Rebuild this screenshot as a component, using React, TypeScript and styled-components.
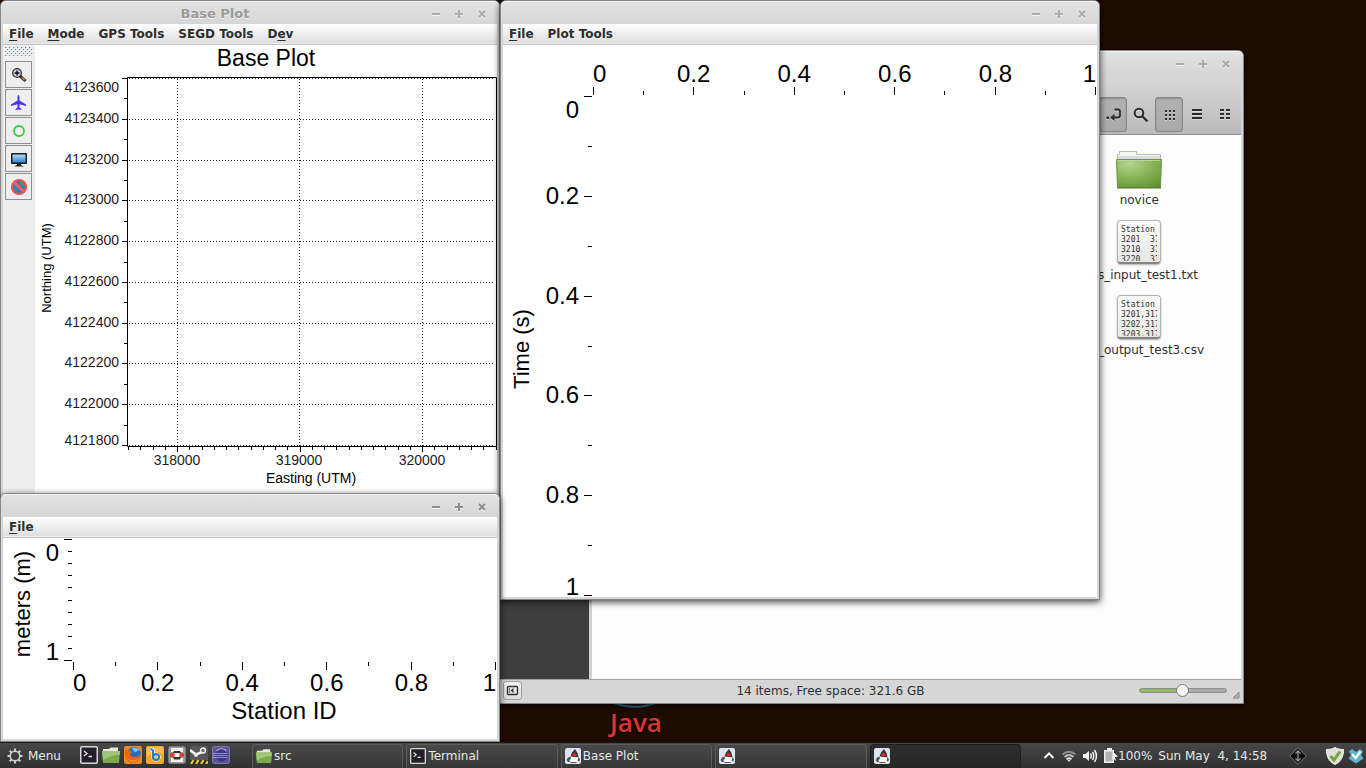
import React from "react";
import styled, { createGlobalStyle, css } from "styled-components";

const GlobalStyle = createGlobalStyle`
  * { box-sizing: border-box; }
  body { margin: 0; background: #1f0c01; }
  body, button, input { font-family: "DejaVu Sans", sans-serif; font-size: 12px; }
  button { border: 0; padding: 0; background: none; color: inherit; }
  svg { display: block; flex: none; }
`;

/* ---------- desktop ---------- */

const Desktop = styled.div`
  display: flex;
  flex-direction: column;
  width: 100%;
  height: 100vh;
  overflow: hidden;
`;

const Workspace = styled.main`
  position: relative;
  flex: 1;
  min-height: 0;
  background: #1f0c01;
`;

const Wallpaper = styled.div`
  position: absolute;
  left: 604px;
  top: 688px;
  width: 64px;
  display: flex;
  flex-direction: column;
  align-items: center;
`;

const JavaName = styled.span`
  font: 600 26px/28px "Open Sans", sans-serif;
  color: #dc3535;
  text-shadow: 0 1px 3px #000;
`;

/* ---------- window frame ---------- */

const Frame = styled.section<{ $x: number; $y: number; $w: number; $h: number }>`
  position: absolute;
  left: ${(p) => p.$x}px;
  top: ${(p) => p.$y}px;
  width: ${(p) => p.$w}px;
  height: ${(p) => p.$h}px;
  display: flex;
  flex-direction: column;
  padding: 0 2px 2px;
  border: 1px solid #868686;
  border-radius: 6px 6px 0 0;
  background: #d6d6d6;
  box-shadow: 0 2px 7px rgba(0, 0, 0, 0.75);
`;

const TitleBar = styled.header`
  display: flex;
  align-items: center;
  flex: none;
  height: 23px;
  margin: 0 -2px;
  padding: 1px 6px 0 5px;
  border-top: 1px solid #f6f6f6;
  border-radius: 5px 5px 0 0;
  background: linear-gradient(#e2e2e2, #d6d6d6);
`;

const Title = styled.h1`
  flex: 1;
  margin: 0;
  text-align: center;
  font-size: 13px;
  line-height: 16px;
  color: #9b9b9b;
  text-shadow: 0 1px 0 #f4f4f4;
`;

const WindowButton = styled.button<{ $active?: boolean }>`
  display: grid;
  place-items: center;
  width: 23px;
  height: 20px;
  color: ${(p) => (p.$active ? "#8d8d8d" : "#ababab")};
  svg { filter: drop-shadow(0 1px 0 #f2f2f2); }
`;

const MenuBar = styled.nav`
  display: flex;
  flex: none;
  gap: 2px;
  height: 21px;
  border-bottom: 1px solid #c2c2c2;
  background: linear-gradient(#ffffff, #dedede 19px, #ebebeb 19px);
`;

const MenuItem = styled.button`
  padding: 0 6px 1px;
  font-weight: bold;
  color: #2d2d2d;
  u { text-underline-offset: 2px; }
`;

const Body = styled.div<{ $bg?: string }>`
  display: flex;
  flex: 1;
  min-height: 0;
  background: ${(p) => p.$bg ?? "#fff"};
`;

function WindowControls({ active }: { active?: boolean }) {
  return (
    <>
      <WindowButton $active={active} aria-label="Minimize">
        <svg width="10" height="10"><path d="M1 5H9" stroke="currentColor" strokeWidth="2" /></svg>
      </WindowButton>
      <WindowButton $active={active} aria-label="Maximize">
        <svg width="10" height="10"><path d="M1 5H9M5 1V9" stroke="currentColor" strokeWidth="2" /></svg>
      </WindowButton>
      <WindowButton $active={active} aria-label="Close">
        <svg width="10" height="10"><path d="M2 2L8 8M8 2L2 8" stroke="currentColor" strokeWidth="2" /></svg>
      </WindowButton>
    </>
  );
}

/* ---------- chart pieces ---------- */

const Chart = styled.svg`
  overflow: visible;
  font-family: "Liberation Sans", Arial, sans-serif;
  fill: #000;
`;

const range = (n: number) => Array.from({ length: n }, (_, i) => i);

type AxisProps = { start: number; step: number; count: number; at: number; every: number; vertical?: boolean; hang?: boolean };

/* A row (or column) of ticks; every n-th one is long. They end at `at`, or begin there when hanging. */
function Ticks({ start, step, count, at, every, vertical, hang }: AxisProps) {
  return (
    <g>
      {range(count).map((i) => {
        const p = Math.round(start + i * step);
        const len = i % every === 0 ? 8 : 4;
        const from = hang ? at : at - len;
        return vertical ? (
          <rect key={i} x={from} y={p} width={len} height={1} />
        ) : (
          <rect key={i} x={p} y={from} width={1} height={len} />
        );
      })}
    </g>
  );
}

function BasePlotChart() {
  const left = 92, right = 461, top = 32, bottom = 401;
  const rowY = (i: number) => Math.round(33 + i * 40.78);
  const labels = range(10).map((i) => 4123600 - i * 200);
  return (
    <Chart width="462" height="449" fontSize="14">
      <text x="231" y="21" fontSize="23" textAnchor="middle">Base Plot</text>
      <path d={`M${left + 0.5} ${top + 0.5}H${right + 0.5}V${bottom + 0.5}H${left + 0.5}Z`} fill="none" stroke="#000" />
      <g stroke="#222" strokeDasharray="1 2" fill="none">
        {labels.map((_, i) => <path key={i} d={`M${left + 2} ${rowY(i) + 0.5}H${right - 2}`} />)}
        {[142, 264, 387].map((x) => <path key={x} d={`M${x + 0.5} ${top + 2}V${bottom}`} />)}
      </g>
      {range(19).map((i) => (
        <rect key={i} x={i % 2 ? 89 : 87} y={Math.round(33 + i * 20.39)} width={i % 2 ? 3 : 5} height={1} />
      ))}
      <g fill="#1c1c1c">
        {labels.map((n, i) => (
          <text key={n} x="84" y={i === 0 ? 47 : i === 9 ? 400 : rowY(i) + 4} textAnchor="end">{n}</text>
        ))}
        {[318000, 319000, 320000].map((n, i) => (
          <text key={n} x={[142, 264, 387][i]} y="420" textAnchor="middle">{n}</text>
        ))}
      </g>
      {range(31).map((i) => (
        <rect key={i} x={Math.round(93 + i * 12.25)} y={402} width={1} height={i % 10 === 4 ? 5 : 3} />
      ))}
      <text x="276" y="438" textAnchor="middle">Easting (UTM)</text>
      <text transform="translate(16 223) rotate(-90)" fontSize="13" textAnchor="middle">Northing (UTM)</text>
    </Chart>
  );
}

const unit = ["0", "0.2", "0.4", "0.6", "0.8", "1"];
const anchorOf = (i: number) => (i === 0 ? "start" : i === 5 ? "end" : "middle");

function ShotChart() {
  return (
    <Chart width="594" height="552" fontSize="24">
      <Ticks start={90} step={50.2} count={11} at={50} every={2} />
      {unit.map((t, i) => (
        <text key={t} x={90 + i * 100.6} y="37" textAnchor={anchorOf(i)}>{t}</text>
      ))}
      <Ticks start={51} step={49.9} count={11} at={89} every={2} vertical />
      {unit.map((t, i) => (
        <text key={t} x="76" y={[73, 159, 259, 358, 458, 550][i]} textAnchor="end">{t}</text>
      ))}
      <text transform="translate(26 304) rotate(-90)" fontSize="22" textAnchor="middle">Time (s)</text>
    </Chart>
  );
}

function StationChart() {
  return (
    <Chart width="494" height="201" fontSize="24">
      <Ticks start={1} step={12.1} count={11} at={69} every={10} vertical />
      <text x="56" y="23" textAnchor="end">0</text>
      <text x="56" y="122" textAnchor="end">1</text>
      <Ticks start={70} step={42.2} count={11} at={124} every={2} hang />
      {unit.map((t, i) => (
        <text key={t} x={70 + i * 84.6} y="153" textAnchor={anchorOf(i)}>{t}</text>
      ))}
      <text x="281" y="181" textAnchor="middle">Station ID</text>
      <text transform="translate(27 66) rotate(-90)" fontSize="22" textAnchor="middle">meters (m)</text>
    </Chart>
  );
}

/* ---------- base plot tool column ---------- */

const ToolColumn = styled.aside`
  display: flex;
  flex-direction: column;
  align-items: flex-start;
  gap: 1px;
  flex: none;
  width: 32px;
  padding: 2px;
  background: #eeeeee;
`;

const Grip = styled.svg`
  width: 28px;
  height: 10px;
  margin-bottom: 3px;
`;

const ToolButton = styled.button`
  display: grid;
  place-items: center;
  width: 27px;
  height: 27px;
  border: 1px solid #8f8f8f;
  background: #eeeeee;
`;

function BasePlotTools() {
  return (
    <ToolColumn>
      <Grip>
        <defs>
          <pattern id="dots" width="4" height="4" patternUnits="userSpaceOnUse">
            <path d="M0 0H1V1H0ZM2 2H3V3H2Z" fill="#6482a0" />
            <path d="M1 1H2V2H1ZM3 3H4V4H3Z" fill="#ffffff" />
            <path d="M1 0H2V1H1ZM3 2H4V3H3Z" fill="#c6d4e2" />
          </pattern>
        </defs>
        <rect width="28" height="10" fill="url(#dots)" />
      </Grip>
      <ToolButton aria-label="Zoom">
        <svg width="16" height="16">
          <path d="M8.500 8.500L14.500 14" stroke="#1a1a1a" strokeWidth="3" />
          <path d="M10.500 10.300L13.800 13.300" stroke="#d78a3a" strokeWidth="1.500" />
          <circle cx="6" cy="6" r="4.300" fill="#c9cbe4" stroke="#26262e" strokeWidth="1.200" />
          <path d="M3.500 6H8.500M6 3.500V8.500" stroke="#111" strokeWidth="1.400" />
        </svg>
      </ToolButton>
      <ToolButton aria-label="Flight">
        <svg width="17" height="17">
          <path d="M8.500 1C9.300 1 9.500 2.500 9.500 3.500V6.500L16 10.500V12L9.500 10.200V13.500L11.500 15V16L8.500 15.400L5.500 16V15L7.500 13.500V10.200L1 12V10.500L7.500 6.500V3.500C7.500 2.500 7.700 1 8.500 1Z" fill="#4a35ee" />
        </svg>
      </ToolButton>
      <ToolButton aria-label="Circle">
        <svg width="16" height="16"><circle cx="8" cy="8" r="5" fill="none" stroke="#41c93f" strokeWidth="1.800" /></svg>
      </ToolButton>
      <ToolButton aria-label="Display">
        <svg width="18" height="16">
          <defs><linearGradient id="screen" x2="0" y2="1"><stop stopColor="#b5dcf7" /><stop offset="1" stopColor="#2a84dc" /></linearGradient></defs>
          <rect x="1" y="2" width="16" height="11" rx="1" fill="#1c1c1c" />
          <rect x="2.500" y="3.500" width="13" height="8" fill="url(#screen)" />
          <path d="M7 13H11V14L14 15.500H4L7 14Z" fill="#2a2a2a" />
        </svg>
      </ToolButton>
      <ToolButton aria-label="Offline">
        <svg width="18" height="18">
          <circle cx="9" cy="9" r="6.500" fill="#2f7cc4" />
          <path d="M10 4L13 5L14 8L12 8L10 6ZM5 10L7 12L7 14L5 12Z" fill="#5d9a3a" />
          <circle cx="9" cy="9" r="7" fill="none" stroke="#f0504a" strokeWidth="2.200" />
          <path d="M4 4L14 14" stroke="#f4635c" strokeWidth="3" />
        </svg>
      </ToolButton>
    </ToolColumn>
  );
}

/* ---------- file manager ---------- */

const FileToolbar = styled.div`
  display: flex;
  flex: none;
  justify-content: flex-end;
  align-items: flex-end;
  height: 61px;
  padding: 0 2px 2px;
  border-bottom: 1px solid #8e8e8e;
  background: linear-gradient(#d6d6d6 10%, #bababa);
`;

const ViewButton = styled.button<{ $on?: boolean }>`
  display: grid;
  place-items: center;
  width: 28px;
  height: 35px;
  border-radius: 3px;
  color: #2c2c2c;
  ${(p) => p.$on && css`
    border: 1px solid #868686;
    background: linear-gradient(#b2b2b2, #aaaaaa);
    box-shadow: inset 0 1px 2px rgba(0, 0, 0, 0.2);
  `}
  svg { filter: drop-shadow(0 1px 0 rgba(255, 255, 255, 0.4)); }
`;

const Sidebar = styled.aside`
  flex: none;
  width: 92px;
  border-right: 3px solid #d3d0cf;
  background: #3e3e3e;
`;

const FileGrid = styled.div`
  display: flex;
  flex: 1;
  flex-direction: column;
  align-items: flex-end;
  padding: 10px 36px 0 0;
`;

const FileItem = styled.figure`
  display: flex;
  flex-direction: column;
  align-items: center;
  width: 132px;
  height: 75px;
  margin: 0;
`;

const FileName = styled.figcaption<{ $span: number }>`
  width: ${(p) => p.$span}px;
  margin-top: 3px;
  line-height: 16px;
  text-align: right;
  white-space: nowrap;
  color: #2c3234;
`;

const PreviewCard = styled.div`
  width: 44px;
  height: 44px;
  padding: 4px 3px;
  border: 1px solid #b4b4b4;
  border-bottom: 2px solid #858585;
  border-radius: 4px;
  background: linear-gradient(#fafafa, #e6e6e6);
  box-shadow: 0 1px 2px rgba(0, 0, 0, 0.3);
`;

const PreviewText = styled.pre`
  height: 36px;
  width: 36px;
  margin: 0;
  overflow: hidden;
  font: 8px/10px "DejaVu Sans Mono", monospace;
  color: #333;
`;

const StatusBar = styled.footer`
  display: flex;
  flex: none;
  align-items: center;
  height: 22px;
  padding: 0 1px 0 3px;
  border-top: 1px solid #a3a3a3;
  color: #2c3234;
`;

const PanelToggle = styled.button`
  display: grid;
  place-items: center;
  width: 19px;
  height: 19px;
  border: 1px solid #a0a0a0;
  border-radius: 3px;
  background: linear-gradient(#f2f2f2, #dcdcdc);
`;

const StatusText = styled.p`
  flex: 1;
  margin: 0;
  text-align: center;
`;

const ZoomSlider = styled.input`
  appearance: none;
  width: 88px;
  height: 14px;
  margin: 0 5px 0 0;
  background: transparent;
  &::-webkit-slider-runnable-track {
    height: 5px;
    border: 1px solid #8c8c8c;
    border-radius: 3px;
    background: linear-gradient(90deg, #90ba63 50%, #a9a9a9 50%);
  }
  &::-webkit-slider-thumb {
    appearance: none;
    width: 13px;
    height: 13px;
    margin-top: -5px;
    border: 1px solid #7b7b7b;
    border-radius: 50%;
    background: linear-gradient(#ffffff, #eeeeee);
  }
`;

function GreenFolder() {
  return (
    <svg width="48" height="44">
      <defs>
        <radialGradient id="leaf" cx=".3" cy=".15" r="1"><stop stopColor="#b5d491" /><stop offset=".45" stopColor="#8db85e" /><stop offset="1" stopColor="#62912f" /></radialGradient>
      </defs>
      <g transform="translate(0 5)">
        <path d="M2.500 12V4.500H4.500V1.500H21.500V4.500H45.500V12Z" fill="#f6f6f6" stroke="#b9b9b9" />
        <rect x="3" y="6" width="42" height="4" fill="#dcdce0" />
        <path d="M1.500 9.500H46.500L45.500 37.500H2.500Z" fill="url(#leaf)" stroke="#6a9440" />
        <path d="M2.500 10.500H45.500" stroke="#b9d59b" />
        <path d="M2 38H46" stroke="#4e7526" />
      </g>
    </svg>
  );
}

function Preview({ text }: { text: string }) {
  return (
    <PreviewCard>
      <PreviewText>{text}</PreviewText>
    </PreviewCard>
  );
}

function FileManager() {
  return (
    <Frame $x={497} $y={50} $w={747} $h={654}>
      <TitleBar><Title /><WindowControls /></TitleBar>
      <FileToolbar>
        <ViewButton $on aria-label="Toggle location entry">
          <svg width="16" height="14"><path d="M9.500 1.500H13C14.500 1.500 15 2.500 15 3.500V7.500C15 9 14 9.500 13 9.500H8" fill="none" stroke="currentColor" strokeWidth="1.800" /><path d="M9.500 6V13L5 9.500ZM1.500 8.500H4V11H1.500Z" fill="currentColor" /></svg>
        </ViewButton>
        <ViewButton aria-label="Search">
          <svg width="16" height="16"><circle cx="6" cy="6" r="4.300" fill="none" stroke="currentColor" strokeWidth="2" /><path d="M9 9L14.500 14.500" stroke="currentColor" strokeWidth="2.400" /></svg>
        </ViewButton>
        <ViewButton $on aria-label="Icon view">
          <svg width="12" height="12">{range(9).map((i) => <rect key={i} x={2 + (i % 3) * 4} y={1 + Math.floor(i / 3) * 4} width="2" height="2" fill="currentColor" />)}</svg>
        </ViewButton>
        <ViewButton aria-label="List view">
          <svg width="10" height="12"><path d="M0 1H10M0 5H10M0 9H10" stroke="currentColor" strokeWidth="2" /></svg>
        </ViewButton>
        <ViewButton aria-label="Compact view">
          <svg width="12" height="12"><path d="M1 1H5M1 5H5M1 9H5M7 1H11M7 5H11M7 9H11" stroke="currentColor" strokeWidth="2" /></svg>
        </ViewButton>
      </FileToolbar>
      <Body $bg="#fcfcfc">
        <Sidebar />
        <FileGrid>
          <FileItem>
            <GreenFolder />
            <FileName $span={40}>novice</FileName>
          </FileItem>
          <FileItem>
            <Preview text={"Station\n3201  31\n3210  31\n3220  31"} />
            <FileName $span={118}>s_input_test1.txt</FileName>
          </FileItem>
          <FileItem>
            <Preview text={"Station\n3201,317\n3202,317\n3203,317"} />
            <FileName $span={130}>_output_test3.csv</FileName>
          </FileItem>
        </FileGrid>
      </Body>
      <StatusBar>
        <PanelToggle aria-label="Toggle sidebar">
          <svg width="13" height="11"><rect x="1.500" y="1.500" width="10" height="8" rx="1" fill="none" stroke="#333" strokeWidth="1.400" /><path d="M3.500 3V8" stroke="#777" /><path d="M7.500 3V8L4.500 5.500Z" fill="#333" /></svg>
        </PanelToggle>
        <StatusText>14 items, Free space: 321.6 GB</StatusText>
        <ZoomSlider type="range" defaultValue={49} aria-label="Icon size" />
        <svg width="8" height="16"><path d="M7 9V15H1Z" fill="#b5b5b5" stroke="#8a8a8a" /></svg>
      </StatusBar>
    </Frame>
  );
}

/* ---------- taskbar ---------- */

const Panel = styled.footer`
  position: relative;
  display: flex;
  flex: none;
  align-items: stretch;
  height: 26px;
  border-top: 1px solid #1a1512;
  background: linear-gradient(#474747, #303030);
  color: #e8e8e8;
`;

const MenuButton = styled.button`
  display: flex;
  align-items: center;
  gap: 5px;
  width: 80px;
  padding-left: 7px;
`;

const Launchers = styled.div`
  display: flex;
  gap: 4px;
  align-items: center;
  width: 172px;
  padding-bottom: 1px;
`;

const TaskList = styled.div`
  display: flex;
  flex: 1;
  gap: 3px;
  min-width: 0;
`;

const Task = styled.button<{ $dark?: boolean }>`
  display: flex;
  flex: 1;
  align-items: center;
  gap: 2px;
  margin-top: 1px;
  padding: 0 0 2px 3px;
  border: 1px solid ${(p) => (p.$dark ? "#1f1f1f" : "#5c5c5c")};
  border-bottom: 0;
  border-radius: 4px 4px 0 0;
  background: ${(p) => (p.$dark ? "linear-gradient(#2e2e2e, #262626)" : "linear-gradient(#484848, #373737)")};
`;

const Tray = styled.div`
  display: flex;
  align-items: center;
  width: 345px;
  padding: 0 2px 0 22px;
`;

const TrayGroup = styled.div<{ $gap: number; $push?: boolean }>`
  display: flex;
  align-items: center;
  gap: ${(p) => p.$gap}px;
  ${(p) => p.$push && "margin-left: auto;"}
`;

const Battery = styled.span`
  display: flex;
  align-items: center;
`;

const Clock = styled.time`
  white-space: pre;
`;

const Launcher = styled.button`
  width: 18px;
  height: 18px;
`;

function Duke() {
  return (
    <svg width="16" height="16">
      <rect width="16" height="16" rx="2" fill="#dce4ef" />
      <path d="M10 1L7 4.500L5.500 8.500L9 9.500L13.500 9.500L12.500 5Z" fill="#34383e" />
      <path d="M5.500 8.500L9 9L13.500 9.500L14 12L12 14.500H6L4.500 12Z" fill="#fbfbfb" />
      <path d="M5.500 8.500L3 9.500L1.500 12L3 14H5L4.500 12L6 11Z" fill="#50555c" />
      <path d="M13.500 9L15 11.500L14 13.500L12.500 12.500ZM6 14H12L11 15H5Z" fill="#50555c" />
      <circle cx="9.500" cy="7" r="2" fill="#e0271f" />
    </svg>
  );
}

function MiniFolder({ size }: { size: number }) {
  return (
    <svg width={size} height={size} viewBox="0 0 18 18">
      <path d="M1 15V3H7L8.500 1.500H16V5H17V15Z" fill="#e4eadf" />
      <path d="M0 5H18L17 17H1Z" fill="#7cab4b" />
      <path d="M0 5H18L17.500 9C11 9 7 11 1 14Z" fill="#a1c679" />
    </svg>
  );
}

function MiniTerminal({ size }: { size: number }) {
  return (
    <svg width={size} height={size} viewBox="0 0 18 18">
      <rect x="0.750" y="0.750" width="16.500" height="16.500" rx="1" fill="#23202b" stroke="#d5d5d5" strokeWidth="1.500" />
      <path d="M4 5L7 7.500L4 10M8.500 10.500H12" fill="none" stroke="#e8e8e8" strokeWidth="1.300" />
    </svg>
  );
}

function Taskbar() {
  return (
    <Panel>
      <MenuButton>
        <svg width="16" height="16">
          <g fill="none" stroke="#cfcfcf">
            <circle cx="8" cy="8" r="4.800" strokeWidth="1.600" />
            <g strokeWidth="2">{range(8).map((i) => <path key={i} d="M8 0.500V3" transform={`rotate(${i * 45} 8 8)`} />)}</g>
          </g>
        </svg>
        Menu
      </MenuButton>
      <Launchers>
        <Launcher aria-label="Terminal"><MiniTerminal size={18} /></Launcher>
        <Launcher aria-label="Files"><MiniFolder size={18} /></Launcher>
        <Launcher aria-label="Firefox">
          <svg width="18" height="18">
            <rect width="18" height="18" rx="2" fill="#e98a1e" />
            <circle cx="10" cy="8" r="7" fill="#2a6fb5" />
            <path d="M8 2C11 1 15 2 16 5C14 4 13 5 12 6C10 6 9 4 8 2Z" fill="#7cc4ea" />
            <path d="M1 3L4 5C6 4 7 5 8 6L6 8C7 11 10 12 13 10C12 13 15 11 16 7C18 13 13 17 9 17C3 17 0 11 1 3Z" fill="#e8651b" />
            <path d="M3 11C5 15 10 16 14 13C12 16 6 17 3 11Z" fill="#f9c440" />
          </svg>
        </Launcher>
        <Launcher aria-label="Browser">
          <svg width="18" height="18">
            <rect width="18" height="18" rx="2" fill="#f5a623" />
            <path d="M1 1H17V8C11 5 6 7 1 11Z" fill="#fbc04c" />
            <path d="M4.500 3C6.500 3.500 7 4 7 5.500V11A3 2.800 0 1 0 10 8.200C8.500 8.200 7.500 9.500 7 11" fill="none" stroke="#fff" strokeWidth="3.600" />
            <path d="M4.500 3C6.500 3.500 7 4 7 5.500V11A3 2.800 0 1 0 10 8.200C8.500 8.200 7.500 9.500 7 11" fill="none" stroke="#2d7ac0" strokeWidth="2.200" />
          </svg>
        </Launcher>
        <Launcher aria-label="Backup">
          <svg width="18" height="18">
            <rect x=".5" y=".5" width="17" height="17" rx="2" fill="#9b9b9b" stroke="#787878" />
            <path d="M3 2H15V6H3ZM3 12H15V16H3Z" fill="#f0f0f0" />
            <path d="M6 5H12L13 7H5ZM5 11H13L12 13.500H6Z" fill="#333" />
            <path d="M2 9H16" stroke="#e03428" strokeWidth="3.400" />
            <rect x="6.500" y="7" width="5" height="4" rx="1" fill="#eee" />
          </svg>
        </Launcher>
        <Launcher aria-label="Steam">
          <svg width="18" height="18">
            <rect width="18" height="18" rx="2" fill="#565656" />
            <path d="M0 4L6 8.500L12 6" fill="none" stroke="#f2f2f2" strokeWidth="2.600" />
            <circle cx="13" cy="4.500" r="2.500" fill="#777" stroke="#f2f2f2" strokeWidth="1.300" />
            <circle cx="6" cy="9" r="2" fill="#eee" />
            <path d="M0 14H18V18H0Z" fill="#2d2d2d" />
            <path d="M1 18L3.500 14M6 18L8.500 14M11 18L13.500 14M16 18L18 15" stroke="#f0c62c" strokeWidth="2.200" />
          </svg>
        </Launcher>
        <Launcher aria-label="Eclipse">
          <svg width="18" height="18">
            <rect x=".5" y=".5" width="17" height="17" rx="2" fill="#5a5799" stroke="#7a78ae" />
            <circle cx="9.500" cy="9" r="6.500" fill="#3d3588" />
            <path d="M4.500 5A6.500 6.500 0 0 1 14.500 5" fill="none" stroke="#c58fc4" strokeWidth="1.400" />
            <path d="M1 7.500H15.500M1 9.500H16M1 11.500H15.500" stroke="#a9a6d8" strokeWidth=".8" />
          </svg>
        </Launcher>
      </Launchers>
      <TaskList>
        <Task><MiniFolder size={16} />src</Task>
        <Task><MiniTerminal size={16} />Terminal</Task>
        <Task><Duke />Base Plot</Task>
        <Task aria-label="Seismic plot"><Duke /></Task>
        <Task $dark aria-label="Station plot"><Duke /></Task>
      </TaskList>
      <Tray>
        <TrayGroup $gap={6}>
          <svg width="12" height="12"><path d="M1.500 8L6 3.500L10.500 8" fill="none" stroke="#f2f2f2" strokeWidth="2" /></svg>
          <svg width="16" height="14">
            <g fill="none" strokeWidth="1.800">
              <path d="M1.500 5.500Q8 0 14.500 5.500" stroke="#8d8d8d" />
              <path d="M3.500 8Q8 4 12.500 8" stroke="#bdbdbd" />
              <path d="M5.500 10.300Q8 8 10.500 10.300" stroke="#e6e6e6" />
            </g>
            <path d="M6.500 11L8 13L9.500 11Q8 10 6.500 11Z" fill="#f2f2f2" />
          </svg>
          <svg width="15" height="14">
            <path d="M0 5H2.500L6 2V12L2.500 9H0Z" fill="#f2f2f2" />
            <path d="M7.500 4.500Q9 7 7.500 9.500M9.500 3Q12 7 9.500 11M11.500 1Q15.500 7 11.500 13" fill="none" stroke="#f2f2f2" strokeWidth="1.500" />
          </svg>
          <Battery>
            <svg width="14" height="15">
              <path d="M3 0H8V2H10V15H0V2H3Z" fill="#f0f0f0" />
              <rect x="1.500" y="3.500" width="7" height="10" fill="#b2b2b2" />
              <path d="M9 4L14 8.500L11 9L12 13L7.500 8.500L10 8Z" fill="#fff" />
            </svg>
            100%
          </Battery>
          <Clock>{"Sun May  4, 14:58"}</Clock>
        </TrayGroup>
        <TrayGroup $gap={4} $push>
          <svg width="33" height="18">
            <path d="M9 .7L17.300 9L9 17.300L.7 9Z" fill="#0e0e0e" stroke="#777" />
            <path d="M9 4.500V13.500M6.500 6.500L9 4L11.500 6.500M6.500 11.500L9 14L11.500 11.500" fill="none" stroke="#8f8f8f" strokeWidth="1.300" />
          </svg>
          <svg width="18" height="18">
            <path d="M9 .5C11.500 2 14 2.500 17.500 2.500C17.500 9 15.500 14.500 9 17.500C2.500 14.500 .5 9 .5 2.500C4 2.500 6.500 2 9 .5Z" fill="#dededa" stroke="#f7f7f4" />
            <path d="M4.500 9L8 13L14 4.500" fill="none" stroke="#74a72f" strokeWidth="3" />
          </svg>
          <svg width="16" height="18">
            <path d="M4 2L8 5L12 2L15 4.500L13 8L15.500 11.500L8 16.500L.5 11.500L3 8L1 4.500Z" fill="#5fb4d6" />
            <path d="M4 7L7.500 11L12.500 4.500" fill="none" stroke="#fff" strokeWidth="2.300" />
          </svg>
        </TrayGroup>
      </Tray>
    </Panel>
  );
}

/* ---------- page ---------- */

export default function App() {
  return (
    <Desktop>
      <GlobalStyle />
      <Workspace>
        <Wallpaper>
          <svg width="48" height="20"><path d="M2 15Q24 23 46 14" fill="none" stroke="#2a7096" strokeWidth="2" /></svg>
          <JavaName>Java</JavaName>
        </Wallpaper>
        <FileManager />
        <Frame $x={0} $y={0} $w={500} $h={497}>
          <TitleBar><Title>Base Plot</Title><WindowControls /></TitleBar>
          <MenuBar>
            <MenuItem><u>F</u>ile</MenuItem>
            <MenuItem><u>M</u>ode</MenuItem>
            <MenuItem>GPS Tools</MenuItem>
            <MenuItem>SEGD Tools</MenuItem>
            <MenuItem>D<u>e</u>v</MenuItem>
          </MenuBar>
          <Body>
            <BasePlotTools />
            <BasePlotChart />
          </Body>
        </Frame>
        <Frame $x={500} $y={0} $w={600} $h={600}>
          <TitleBar><Title /><WindowControls /></TitleBar>
          <MenuBar>
            <MenuItem><u>F</u>ile</MenuItem>
            <MenuItem>Plot Tools</MenuItem>
          </MenuBar>
          <Body><ShotChart /></Body>
        </Frame>
        <Frame $x={0} $y={493} $w={500} $h={249}>
          <TitleBar><Title /><WindowControls active /></TitleBar>
          <MenuBar><MenuItem><u>F</u>ile</MenuItem></MenuBar>
          <Body><StationChart /></Body>
        </Frame>
      </Workspace>
      <Taskbar />
    </Desktop>
  );
}
